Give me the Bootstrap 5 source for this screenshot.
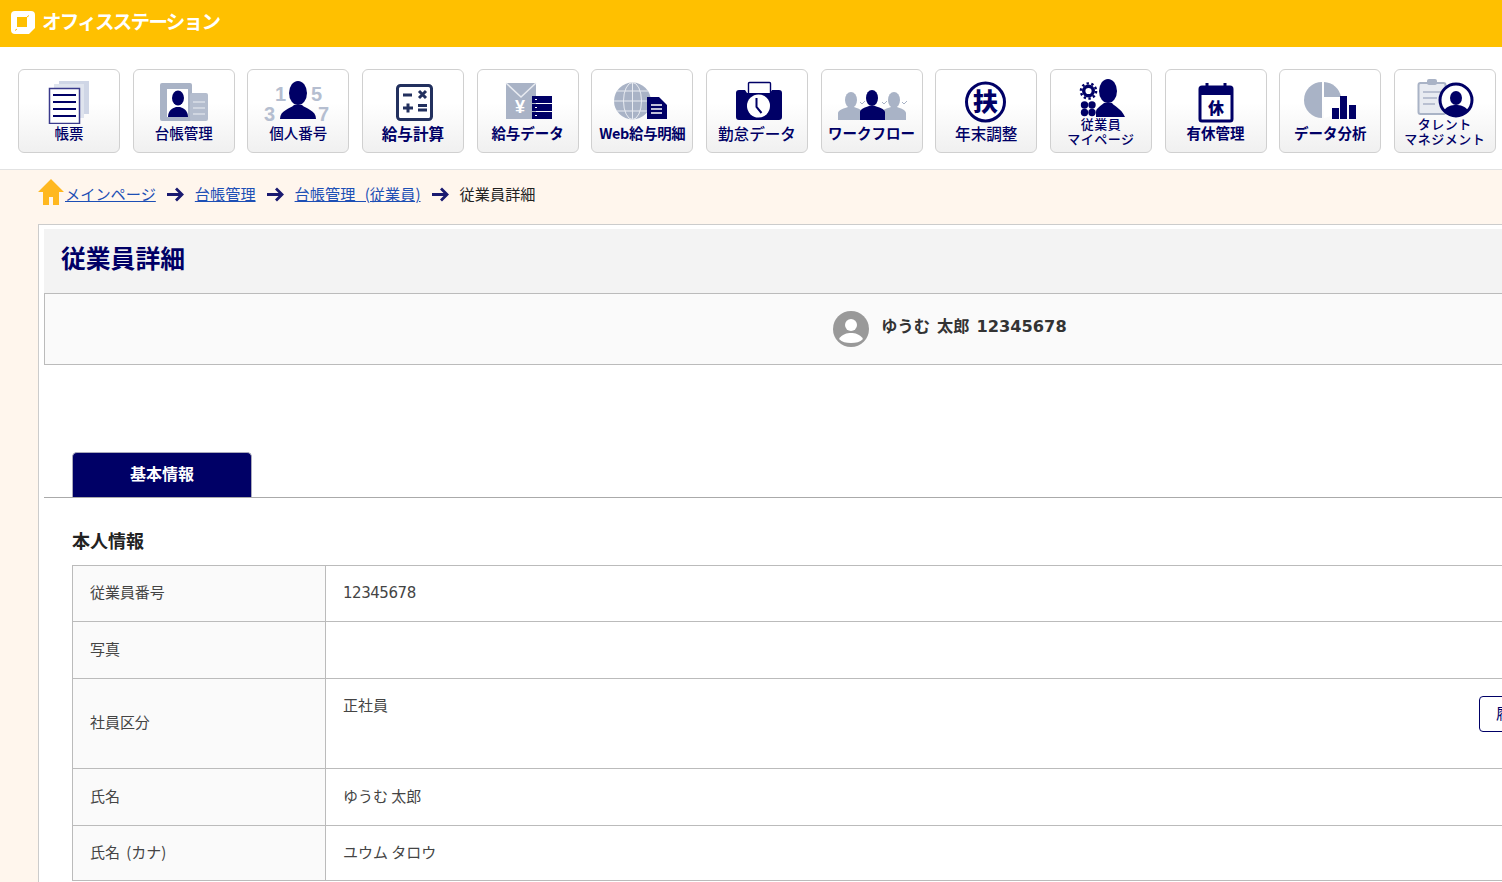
<!DOCTYPE html>
<html lang="ja">
<head>
    <meta charset="UTF-8">
    <title>従業員詳細</title>
    <link href="https://cdn.jsdelivr.net/npm/bootstrap@5.3.0/dist/css/bootstrap.min.css" rel="stylesheet">
    <style>
        html, body { height: 882px; overflow: hidden; }
        body {
            font-family: "DejaVu Sans", "Noto Sans CJK JP", sans-serif;
            font-size: 15px;
            color: #333;
            background: #fff6ed;
        }
        .jp { font-family: "Noto Sans CJK JP", sans-serif; }
        .top-bar { height: 47px; background: #ffc000; padding-left: 11px; padding-bottom: 2px; }
        .logo-text { font-family: "Noto Sans CJK JP", sans-serif; font-size: 19.5px; font-weight: 700; color: #fff; margin-left: 7px; letter-spacing: -1.7px; margin-top: -4px; }
        .tool-bar { height: 123px; background: #fff; border-bottom: 1px solid #e2e2e2; padding: 22px 0 0 18px; gap: 12.67px; }
        .tile {
            width: 102px; height: 84px; flex: none;
            background: linear-gradient(#fff 40%, #f0f0f0);
            border: 1.5px solid #d0d0d0; border-radius: 6px;
            color: #000066; text-decoration: none; text-align: center;
            font-family: "Noto Sans CJK JP", sans-serif; font-size: 14.5px; font-weight: 500; line-height: 16px;
        }
        .tile svg { display: block; margin: 7.5px auto 0; width: 80px; height: 46px; }
        .tile-b { font-weight: 700; }
        .tile-wide { font-size: 15.6px; }
        .tile-web { font-size: 14.4px; letter-spacing: -.3px; }
        .tile-label { display: block; margin-top: 1px; white-space: nowrap; }
        .tile-small { font-size: 13px; font-weight: 500; line-height: 15px; letter-spacing: .5px; margin-top: -8px; display: block; position: relative; }
        .crumb-row { height: 54px; padding: 0 0 8px 38px; font-family: "Noto Sans CJK JP", sans-serif; font-size: 15.2px; color: #222; word-spacing: 6px; }
        .crumb-row a { color: #1d4fb5; }
        .crumb-arrow { margin: 2px 11px 0 11px; }
        .crumb-home { margin-top: -2px; }
        .sheet {
            width: 1824px; margin-left: 38px; height: 700px;
            background: #fff; border: 1px solid #ccc; padding: 4px 0 0 5px;
        }
        .sheet-title {
            height: 64px; line-height: 57px; background: #f3f3f3; padding-left: 17px; margin: 0;
            font-family: "Noto Sans CJK JP", sans-serif; font-size: 24.8px; font-weight: 700; color: #000066;
        }
        .person-bar { width: 1812px; height: 72px; background: #fafafa; border: 1px solid #bbb; }
        .person-name { font-size: 16.2px; font-weight: 700; color: #333; margin-left: 12px; margin-top: -3px; word-spacing: 1.5px; }
        .tab-row { margin-top: 87px; height: 46px; border-bottom: 1px solid #aaa; padding-left: 28px; }
        .tab-on {
            width: 180px; height: 45px; line-height: 40px; text-align: center;
            background: #000066; color: #fff; border: 1px solid #aab; border-bottom: 0; border-radius: 5px 5px 0 0;
            font-family: "Noto Sans CJK JP", sans-serif; font-size: 16px; font-weight: 700;
        }
        .block-head { margin: 30px 0 10px 28px; height: 27px; line-height: 25px; font-family: "Noto Sans CJK JP", sans-serif; font-size: 18px; font-weight: 700; color: #222; }
        .info-table { width: 1756px; margin-left: 28px; border-collapse: collapse; table-layout: fixed; }
        .info-table th, .info-table td { border: 1px solid #bbb; padding: 0 17px; font-weight: 400; font-size: 15px; color: #444; }
        .info-table th { width: 253px; background: #fafafa; font-family: "Noto Sans CJK JP", sans-serif; padding-bottom: 2px; letter-spacing: -.05px; word-spacing: 3px; }
        .info-table td.jp { padding-bottom: 2px; }
        .num { font-size: 14.2px; letter-spacing: -.45px; }
        .type-row { height: 72px; margin-top: 14px; }
        .hist-btn { height: 36px; padding: 0 16px; border: 1px solid #000066; border-radius: 4px; background: #fff; color: #000066; font-size: 15px; font-family: "Noto Sans CJK JP", sans-serif; margin-right: 267px; margin-top: 2px; }
    </style>
</head>
<body>
    <div class="top-bar d-flex align-items-center">
        <svg width="24" height="24" viewBox="0 0 24 24"><path d="M4 0H20a4 4 0 0 1 4 4V17L18 23H4a4 4 0 0 1-4-4V4a4 4 0 0 1 4-4Z" fill="#fff"/><path d="M6 6H16V16H6Z" fill="#ffc000"/><path d="M6 18L4 19.500M16 6L18 4.500" stroke="#ffc000" stroke-width="1"/></svg>
        <span class="logo-text">オフィスステーション</span>
    </div>

    <div class="tool-bar d-flex">
        <a class="tile" href="#">
            <svg viewBox="0 0 80 46"><path d="M30 3H60V36H54V8H30Z" fill="#cfd6e6"/><path d="M25 6H55V40H50V11H25Z" fill="#dfe4ee"/><rect x="20.5" y="10.5" width="30" height="35" fill="#fff" stroke="#3a3a8c" stroke-width="1.5"/><path d="M24 17H47M24 24H47M24 31H47M24 38H47" stroke="#000066" stroke-width="2"/></svg>
            <span class="tile-label">帳票</span>
        </a>
        <a class="tile" href="#">
            <svg viewBox="0 0 80 46"><rect x="16" y="5" width="32" height="38" rx="2" fill="#a9b3c6"/><rect x="46" y="15" width="18" height="28" rx="2" fill="#b4bdce"/><rect x="23" y="11" width="21" height="28" fill="#fff"/><path d="M49 24H61M49 30H61M49 36H61" stroke="#d9dee8" stroke-width="1.4"/><ellipse cx="34" cy="20" rx="6" ry="7.5" fill="#000066"/><path d="M24 39c0-7 5-9 8-10h4c3 1 8 3 8 10Z" fill="#000066"/></svg>
            <span class="tile-label">台帳管理</span>
        </a>
        <a class="tile" href="#">
            <svg viewBox="0 0 80 46"><ellipse cx="40" cy="15" rx="9" ry="12" fill="#000066"/><path d="M22 41c0-9 10-10 14-14h8c4 4 14 5 14 14Z" fill="#000066"/><g font-family="Liberation Sans, sans-serif" font-size="20" font-weight="700" fill="#b5bed0"><text x="17" y="23">1</text><text x="53" y="23">5</text><text x="6" y="43">3</text><text x="60" y="43">7</text></g></svg>
            <span class="tile-label">個人番号</span>
        </a>
        <a class="tile tile-b tile-wide" href="#">
            <svg viewBox="0 0 80 46"><rect x="24.5" y="7.5" width="34" height="34" rx="3" fill="#fff" stroke="#22305e" stroke-width="3"/><path d="M30 17H39M30 30H40M35 25.5V34.5M46 13L53 20M53 13L46 20M45 27.5H54M45 32H54" stroke="#22305e" stroke-width="3"/></svg>
            <span class="tile-label">給与計算</span>
        </a>
        <a class="tile tile-b" href="#">
            <svg viewBox="0 0 80 46"><path d="M18 5H48V41H18Z" fill="#a9b3c6"/><path d="M18 5L33 19L48 5" fill="none" stroke="#e8ebf1" stroke-width="1.5"/><text x="27" y="35" font-family="Liberation Sans, sans-serif" font-size="18" font-weight="700" fill="#fff">¥</text><rect x="44" y="18" width="20" height="7" fill="#000066"/><rect x="44" y="26" width="20" height="7" fill="#000066"/><rect x="44" y="34" width="20" height="7" fill="#000066"/><path d="M47 21.5h2M47 29.5h2M47 37.5h2" stroke="#fff"/></svg>
            <span class="tile-label">給与データ</span>
        </a>
        <a class="tile tile-b tile-web" href="#">
            <svg viewBox="0 0 80 46"><circle cx="30.5" cy="23" r="18.5" fill="#a9b3c6"/><path d="M30.5 4.5V41.5M12 23H49M15 13H46M15 33H46" stroke="#e8ebf1" stroke-width="1"/><ellipse cx="30.5" cy="23" rx="9" ry="18.5" fill="none" stroke="#e8ebf1"/><path d="M45 19H57L65 27V41H45Z" fill="#000066"/><path d="M49 27H60M49 31H60M49 35H60" stroke="#fff" stroke-width="1.5"/></svg>
            <span class="tile-label">Web給与明細</span>
        </a>
        <a class="tile tile-wide" href="#">
            <svg viewBox="0 0 80 46"><rect x="31.5" y="4.5" width="22" height="12" rx="1" fill="#fff" stroke="#000066" stroke-width="1.4"/><path d="M22 12H28L30 15H53L55 12H62a3 3 0 0 1 3 3V39a3 3 0 0 1-3 3H22a3 3 0 0 1-3-3V15a3 3 0 0 1 3-3Z" fill="#000066"/><circle cx="41.5" cy="28" r="11.5" fill="#fff"/><path d="M39.5 20V29L44.5 35" fill="none" stroke="#000066" stroke-width="2"/></svg>
            <span class="tile-label">勤怠データ</span>
        </a>
        <a class="tile tile-b" href="#">
            <svg viewBox="0 0 80 46"><ellipse cx="19" cy="22" rx="6" ry="8" fill="#a9b3c6"/><path d="M6 42V35c0-3 7-5 10-6h6c3 1 9 3 9 6v7Z" fill="#a9b3c6"/><ellipse cx="62" cy="22" rx="6" ry="8" fill="#a9b3c6"/><path d="M49 42V35c0-3 7-5 10-6h6c3 1 9 3 9 6v7Z" fill="#a9b3c6"/><ellipse cx="40" cy="20" rx="6" ry="8" fill="#000066"/><path d="M28 42V34c0-3 6-5 9-6h6c3 1 10 3 10 6v8Z" fill="#000066"/><path d="M28 24l2 2 3-3M50 24l2 2 3-3M70 24l2 2 3-3" fill="none" stroke="#a9b3c6"/></svg>
            <span class="tile-label">ワークフロー</span>
        </a>
        <a class="tile tile-wide" href="#">
            <svg viewBox="0 0 80 46"><circle cx="39.5" cy="24" r="19" fill="#fff" stroke="#000066" stroke-width="3"/><text x="39.5" y="33" text-anchor="middle" font-family="Noto Sans CJK JP, sans-serif" font-size="25" font-weight="900" fill="#000066">扶</text></svg>
            <span class="tile-label">年末調整</span>
        </a>
        <a class="tile" href="#">
            <svg viewBox="0 0 80 46"><circle cx="27.5" cy="13" r="4.8" fill="none" stroke="#000066" stroke-width="3.4"/><circle cx="27.5" cy="13" r="7.6" fill="none" stroke="#000066" stroke-width="2.4" stroke-dasharray="2.4 2.4"/><g fill="#000066"><circle cx="23.5" cy="27" r="3.7"/><circle cx="31" cy="27" r="3.7"/><circle cx="23.5" cy="34.5" r="3.7"/><circle cx="31" cy="34.5" r="3.7"/><ellipse cx="47" cy="13" rx="9" ry="12"/><path d="M35 39V34c0-4 5-6 8-9h8c3 4 9 5 13 14Z"/></g></svg>
            <span class="tile-small">従業員<br>マイページ</span>
        </a>
        <a class="tile tile-b" href="#">
            <svg viewBox="0 0 80 46"><rect x="24" y="9" width="32" height="34" rx="2" fill="#fff" stroke="#000066" stroke-width="3"/><path d="M24 9H56V17H24Z" fill="#000066"/><path d="M31 5V10M49 5V10" stroke="#000066" stroke-width="3"/><text x="40" y="36" text-anchor="middle" font-family="Noto Sans CJK JP, sans-serif" font-size="16" font-weight="900" fill="#000066">休</text></svg>
            <span class="tile-label">有休管理</span>
        </a>
        <a class="tile tile-b" href="#">
            <svg viewBox="0 0 80 46"><path d="M32 4A18 18 0 0 0 32 40Z" fill="#a9b3c6"/><path d="M34 4A18 18 0 0 1 51 19H34Z" fill="#a9b3c6"/><path d="M34 22H50A18 18 0 0 1 34 40Z" fill="#fff"/><path d="M40 31H47V42H40ZM48 19H55V42H48ZM57 28H64V42H57Z" fill="#000066" transform="translate(2 -1)"/></svg>
            <span class="tile-label">データ分析</span>
        </a>
        <a class="tile" href="#">
            <svg viewBox="0 0 80 46"><rect x="13.5" y="5" width="27" height="31" rx="2" fill="#e8ebf1" stroke="#a9b3c6" stroke-width="2"/><rect x="22" y="1" width="10" height="6" rx="2" fill="#a9b3c6"/><path d="M18 14H36M18 20H32M18 26H30" stroke="#a9b3c6" stroke-width="1.6"/><circle cx="51" cy="22" r="16" fill="#fff" stroke="#000066" stroke-width="3"/><ellipse cx="51" cy="20" rx="6" ry="7" fill="#000066"/><path d="M39 33c2-5 8-6 12-6s10 1 12 6a16 16 0 0 1-24 0Z" fill="#000066"/></svg>
            <span class="tile-small">タレント<br>マネジメント</span>
        </a>
    </div>

    <div class="crumb-row d-flex align-items-center">
        <svg class="crumb-home" width="27" height="26" viewBox="0 0 27 26"><path d="M13 0L26 13H21V26H15V18H11V26H5V13H0Z" fill="#ffb820"/></svg>
        <a href="#">メインページ</a>
        <svg class="crumb-arrow" width="17" height="15" viewBox="0 0 17 15"><path d="M0 7.5H15M9 1.5L15 7.5L9 13.5" fill="none" stroke="#1a1a70" stroke-width="2.8"/></svg>
        <a href="#">台帳管理</a>
        <svg class="crumb-arrow" width="17" height="15" viewBox="0 0 17 15"><path d="M0 7.5H15M9 1.5L15 7.5L9 13.5" fill="none" stroke="#1a1a70" stroke-width="2.8"/></svg>
        <a href="#">台帳管理 (従業員)</a>
        <svg class="crumb-arrow" width="17" height="15" viewBox="0 0 17 15"><path d="M0 7.5H15M9 1.5L15 7.5L9 13.5" fill="none" stroke="#1a1a70" stroke-width="2.8"/></svg>
        <span>従業員詳細</span>
    </div>

    <div class="sheet">
        <h1 class="sheet-title">従業員詳細</h1>
        <div class="person-bar d-flex align-items-center justify-content-center">
            <svg width="36" height="36" viewBox="0 0 36 36"><circle cx="18" cy="18" r="18" fill="#999"/><circle cx="18" cy="14" r="6" fill="#fff"/><path d="M6 28c3-5 8-6 12-6s9 1 12 6c-3 3-7 4-12 4s-9-1-12-4Z" fill="#fff"/></svg>
            <span class="person-name">ゆうむ 太郎 12345678</span>
        </div>
        <div class="tab-row d-flex align-items-end">
            <div class="tab-on">基本情報</div>
        </div>
        <div class="block-head">本人情報</div>
        <table class="info-table">
            <tr style="height:56px"><th>従業員番号</th><td class="num">12345678</td></tr>
            <tr style="height:57px"><th>写真</th><td></td></tr>
            <tr style="height:90px"><th>社員区分</th><td class="jp">
                <div class="type-row d-flex justify-content-between align-items-start">
                    <span>正社員</span>
                    <button class="hist-btn">履歴</button>
                </div>
            </td></tr>
            <tr style="height:57px"><th>氏名</th><td class="jp">ゆうむ 太郎</td></tr>
            <tr style="height:55px"><th>氏名 (カナ)</th><td class="jp">ユウム タロウ</td></tr>
        </table>
    </div>

    <script src="https://cdn.jsdelivr.net/npm/bootstrap@5.3.0/dist/js/bootstrap.bundle.min.js"></script>
</body>
</html>
